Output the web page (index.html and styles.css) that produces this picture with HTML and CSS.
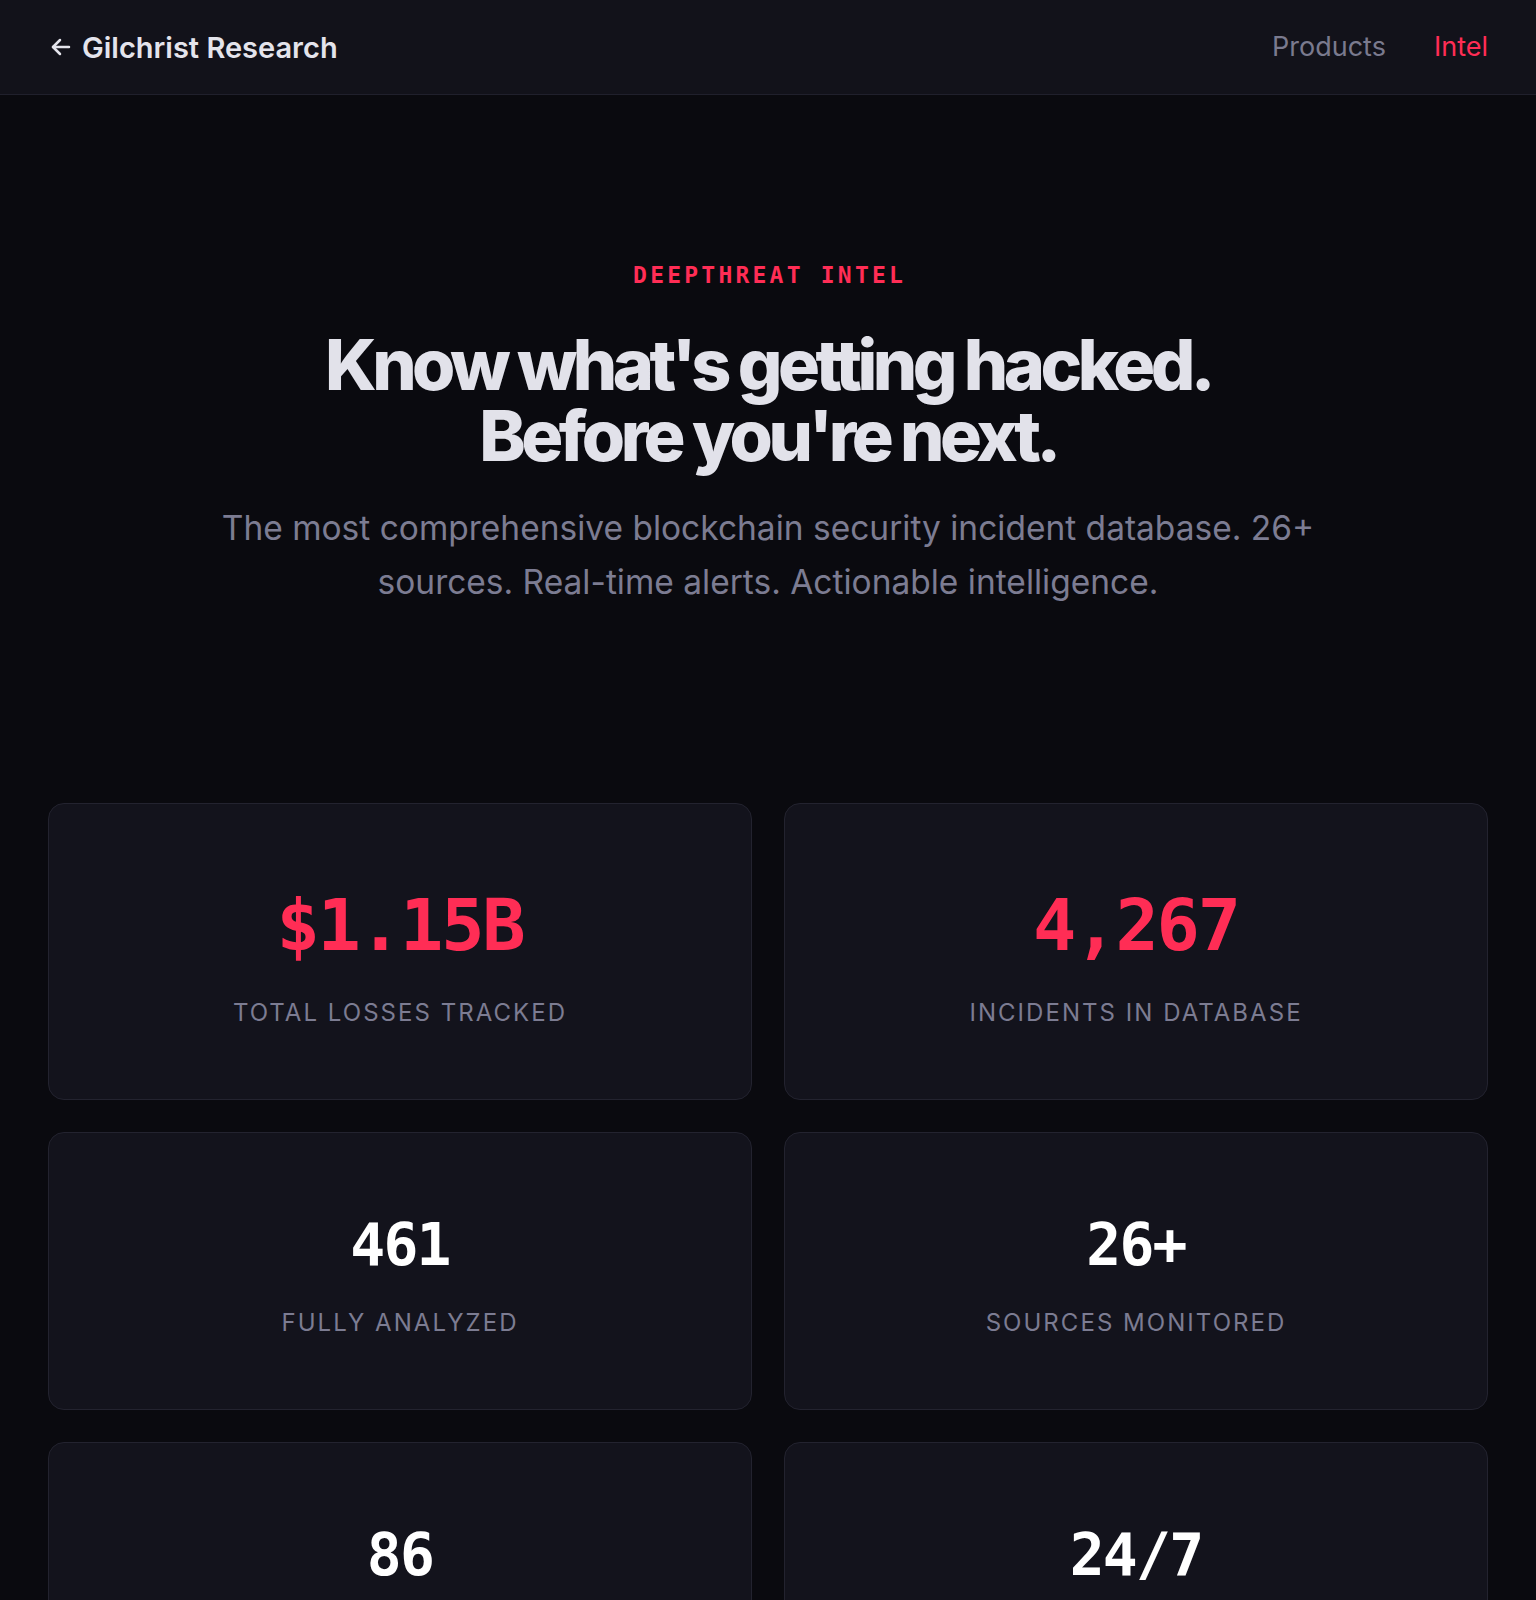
FILE: index.html
```html
<!DOCTYPE html>
<html lang="en">
<head>
<meta charset="utf-8">
<title>DeepThreat Intel — Gilchrist Research</title>
<link rel="stylesheet" href="styles.css">
</head>
<body>
<header class="topbar">
  <a class="brand" href="#">
    <svg class="brand-arrow" viewBox="0 0 24 24" width="24" height="24" fill="none" stroke="currentColor" stroke-width="2.5" stroke-linecap="round" stroke-linejoin="round"><path d="M20 12H4"/><path d="M11 5l-7 7 7 7"/></svg>
    <span>Gilchrist Research</span>
  </a>
  <nav class="nav">
    <a href="#" class="nav-link">Products</a>
    <a href="#" class="nav-link nav-link-active">Intel</a>
  </nav>
</header>

<main>
  <section class="hero">
    <div class="eyebrow">DEEPTHREAT INTEL</div>
    <h1 class="hero-title">Know what's getting hacked.<br>Before you're next.</h1>
    <p class="hero-sub">The most comprehensive blockchain security incident database. 26+ sources. Real-time alerts. Actionable intelligence.</p>
  </section>

  <section class="stats">
    <div class="stat stat-big">
      <div class="stat-value accent">$1.15B</div>
      <div class="stat-label">Total losses tracked</div>
    </div>
    <div class="stat stat-big">
      <div class="stat-value accent">4,267</div>
      <div class="stat-label">Incidents in database</div>
    </div>
    <div class="stat">
      <div class="stat-value">461</div>
      <div class="stat-label">Fully analyzed</div>
    </div>
    <div class="stat">
      <div class="stat-value">26+</div>
      <div class="stat-label">Sources monitored</div>
    </div>
    <div class="stat">
      <div class="stat-value">86</div>
      <div class="stat-label">Active alerts</div>
    </div>
    <div class="stat">
      <div class="stat-value">24/7</div>
      <div class="stat-label">Monitoring</div>
    </div>
  </section>
</main>
</body>
</html>
```

FILE: styles.css
```css
* { box-sizing: border-box; }

html, body {
  margin: 0;
  padding: 0;
}

body {
  background: #0a0a0f;
  color: #e2e2ea;
  font-family: "Inter", "Noto Sans", sans-serif;
}

a { text-decoration: none; color: inherit; }

.topbar {
  height: 95px;
  display: flex;
  align-items: center;
  justify-content: space-between;
  padding: 0 48px 0 49px;
  background: #12121a;
  border-bottom: 1px solid #20202c;
}

.brand {
  display: flex;
  align-items: center;
  gap: 9px;
  font-size: 29px;
  font-weight: 600;
  color: #e4e4ec;
}

.brand-arrow { display: block; }

.nav {
  display: flex;
  align-items: center;
  gap: 48px;
  font-size: 27px;
  margin-top: -2px;
}

.nav-link { color: #7a7a8e; }
.nav-link-active { color: #ff2d55; }

.hero {
  padding: 165px 48px 194px;
  text-align: center;
}

.eyebrow {
  font-family: "DejaVu Sans Mono", "Liberation Mono", monospace;
  font-weight: 700;
  font-size: 23px;
  line-height: 30px;
  letter-spacing: 0.14em;
  color: #ff2d55;
  margin-left: 0.14em;
}

.hero-title {
  margin: 39px 0 0;
  font-size: 70px;
  line-height: 71px;
  font-weight: 800;
  letter-spacing: -0.064em;
  color: #e2e2ea;
}

.hero-sub {
  margin: 30px auto 0;
  max-width: 1150px;
  font-size: 33.5px;
  line-height: 54px;
  color: #7c7c92;
}

.stats {
  display: grid;
  grid-template-columns: 1fr 1fr;
  gap: 32px;
  padding: 0 48px 60px;
}

.stat {
  background: #13131c;
  border: 1px solid #23232f;
  border-radius: 16px;
  padding: 75px 24px 69px;
  text-align: center;
}

.stat-value {
  font-family: "DejaVu Sans Mono", "Liberation Mono", monospace;
  font-weight: 700;
  font-size: 58px;
  line-height: 1.3;
  letter-spacing: -0.03em;
  color: #ffffff;
}

.stat-big .stat-value {
  font-size: 72px;
}

.stat-value.accent { color: #ff2d55; }

.stat-label {
  margin-top: 23px;
  font-size: 24px;
  line-height: 34px;
  letter-spacing: 0.085em;
  text-transform: uppercase;
  color: #7c7c92;
}
```
